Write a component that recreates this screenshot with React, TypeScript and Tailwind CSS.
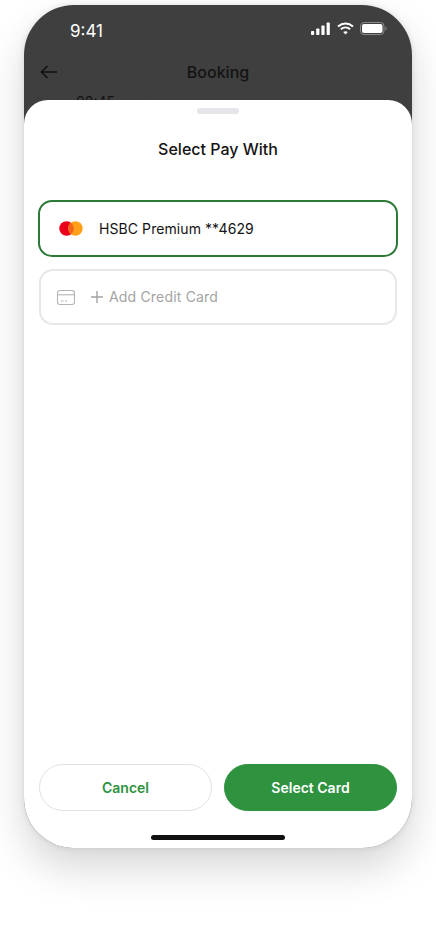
import React from "react";

export default function App() {
  return (
    <div className="w-[436px] h-[928px] bg-white pt-[5px] pl-[24px] font-['Inter',sans-serif]">
      <div className="relative w-[388px] h-[843px] rounded-[50px] bg-white shadow-[0_20px_40px_rgba(0,0,0,0.16),0_0_6px_rgba(0,0,0,0.1)]">
        <div className="w-full h-full rounded-[50px] overflow-hidden flex flex-col">
          {/* Dimmed header */}
          <div className="h-[95px] shrink-0 bg-[#3f3f3f] relative overflow-hidden">
            <div className="flex items-center justify-between pl-[46px] pr-[25px] pt-[3px] h-[48px]">
              <span className="text-[17px] leading-[22px] text-white">9:41</span>
              <div className="flex items-center gap-[6px] -translate-y-[2px]">
                <svg width="20" height="13" viewBox="0 0 20 13" fill="white">
                  <rect x="0" y="9" width="3.2" height="4" rx="0.8" />
                  <rect x="5.2" y="6.5" width="3.2" height="6.5" rx="0.8" />
                  <rect x="10.4" y="3.5" width="3.2" height="9.5" rx="0.8" />
                  <rect x="15.6" y="0.5" width="3.2" height="12.5" rx="0.8" />
                </svg>
                <svg width="17" height="13" viewBox="0 0 17 13" fill="none" stroke="white" strokeWidth="2">
                  <path d="M1 4.5 C5.5 0.5 11.5 0.5 16 4.5" />
                  <path d="M3.8 7.3 C6.5 5 10.5 5 13.2 7.3" />
                  <path d="M8.5 12.4 L6.2 9.9 C7.6 8.9 9.4 8.9 10.8 9.9 Z" fill="white" stroke="none" />
                </svg>
                <svg width="27" height="13" viewBox="0 0 27 13" fill="none">
                  <rect x="0.5" y="0.5" width="23.5" height="12" rx="3.5" stroke="#8a8a8a" />
                  <rect x="2" y="2" width="20.5" height="9" rx="2" fill="white" />
                  <path d="M25.5 4.5 C26.3 4.8 26.6 5.6 26.6 6.5 C26.6 7.4 26.3 8.2 25.5 8.5 Z" fill="#8a8a8a" />
                </svg>
              </div>
            </div>
            <div className="relative flex items-center justify-center h-[24px] mt-[7px]">
              <svg className="absolute left-[16px] top-[4px]" width="18" height="16" viewBox="0 0 18 16" fill="none" stroke="#111111" strokeWidth="1.6">
                <path d="M17 8 H1.5" />
                <path d="M7.5 2 L1.5 8 L7.5 14" />
              </svg>
              <span className="text-[16px] font-medium leading-[24px] text-[#131313]">Booking</span>
            </div>
            <div className="absolute left-[52px] top-[87px] text-[14px] leading-[20px] text-[#131313]">08:45</div>
            <div className="absolute left-[14px] top-[92px] w-[112px] h-[10px] border-x border-[#383838]" />
          </div>
          {/* Sheet */}
          <div className="flex-1 bg-[#3f3f3f]">
            <div className="h-full rounded-t-[24px] bg-white flex flex-col items-stretch">
              <div className="pt-[8px] flex justify-center">
                <div className="w-[42px] h-[6px] rounded-full bg-[#e5e6ea]" />
              </div>
              <h2 className="mt-[23px] text-center text-[16px] font-medium leading-[24px] text-[#131313]">Select Pay With</h2>
              <div className="mt-[39px] px-[14px] flex flex-col gap-[12px]">
                <div className="h-[57px] rounded-[14px] border-2 border-[#2d7a38] flex items-center pl-[19px]">
                  <svg width="24" height="15" viewBox="0 0 24 15">
                    <circle cx="7.6" cy="7.5" r="7.3" fill="#eb001b" />
                    <circle cx="16.4" cy="7.5" r="7.3" fill="#ff9f1a" />
                    <path d="M12 1.7 A7.3 7.3 0 0 1 12 13.3 A7.3 7.3 0 0 1 12 1.7 Z" fill="#f4641d" />
                  </svg>
                  <span className="ml-[16px] text-[14px] leading-[20px] font-normal tracking-[0.08px] text-[#131313]">HSBC Premium **4629</span>
                </div>
                <div className="mx-[1px] h-[56px] rounded-[14px] border-2 border-[#e6e7ea] flex items-center pl-[15px]">
                  <svg width="20" height="17" viewBox="0 0 20 17" fill="none" stroke="#b4b4b4" strokeWidth="1.1">
                    <rect x="1.5" y="1.5" width="17" height="14" rx="2.5" />
                    <path d="M1.5 5.8 H18.5" />
                    <path d="M5 12 H7.5 M9 12 H11" />
                  </svg>
                  <svg className="ml-[14px]" width="14" height="14" viewBox="0 0 14 14" fill="none" stroke="#a3a3a3" strokeWidth="1.4">
                    <path d="M7 1 V13 M1 7 H13" />
                  </svg>
                  <span className="ml-[5px] text-[14px] leading-[20px] font-normal tracking-[0.18px] text-[#a3a3a3]">Add Credit Card</span>
                </div>
              </div>
              <div className="flex-1" />
              <div className="px-[15px] flex gap-[12px]">
                <button className="flex-1 h-[47px] rounded-full border border-[#e0e0e0] bg-white text-[14px] font-semibold text-[#2e923f]">Cancel</button>
                <button className="flex-1 h-[47px] rounded-full border border-[#2e923f] bg-[#2e923f] text-[14px] font-semibold text-white">Select Card</button>
              </div>
              <div className="mt-[24px] mb-[8px] flex justify-center">
                <div className="w-[134px] h-[5px] rounded-full bg-[#111111]" />
              </div>
            </div>
          </div>
        </div>
      </div>
    </div>
  );
}
